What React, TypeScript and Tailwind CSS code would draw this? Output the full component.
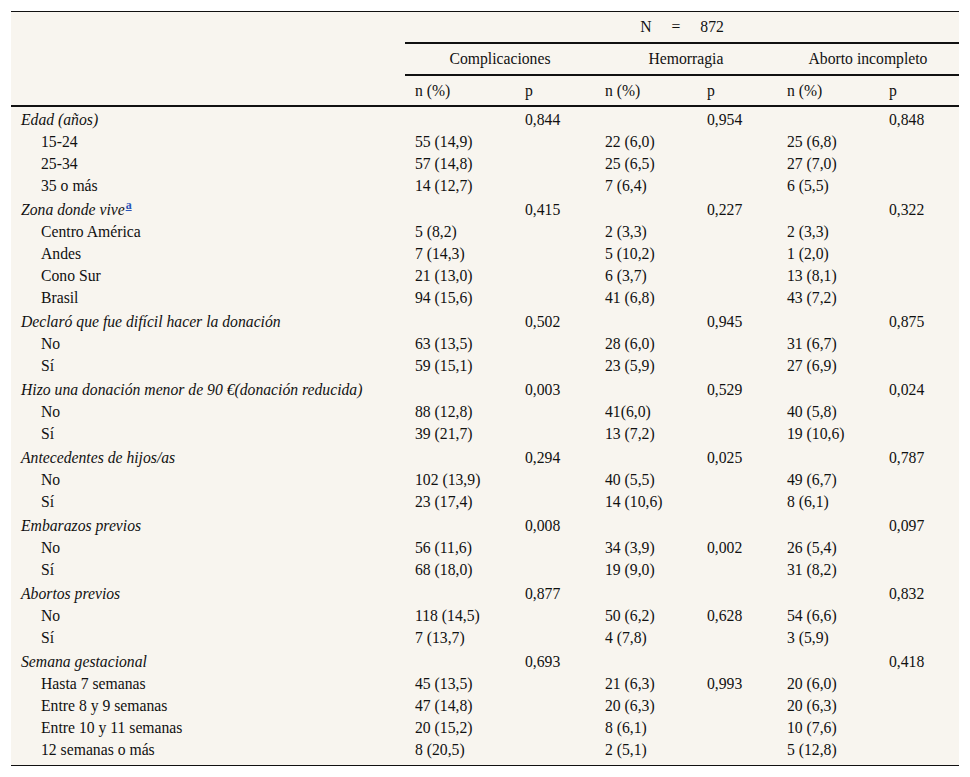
import React from "react"

type Row = { label: string; cells: string[]; head?: boolean; sup?: string }

const cols = ["w-[110px]", "w-[80px]", "w-[102px]", "w-[80px]", "w-[102px]", "w-[80px]"]

const rows: Row[] = [
  { label: "Edad (años)", head: true, cells: ["", "0,844", "", "0,954", "", "0,848"] },
  { label: "15-24", cells: ["55 (14,9)", "", "22 (6,0)", "", "25 (6,8)", ""] },
  { label: "25-34", cells: ["57 (14,8)", "", "25 (6,5)", "", "27 (7,0)", ""] },
  { label: "35 o más", cells: ["14 (12,7)", "", "7 (6,4)", "", "6 (5,5)", ""] },
  { label: "Zona donde vive", sup: "a", head: true, cells: ["", "0,415", "", "0,227", "", "0,322"] },
  { label: "Centro América", cells: ["5 (8,2)", "", "2 (3,3)", "", "2 (3,3)", ""] },
  { label: "Andes", cells: ["7 (14,3)", "", "5 (10,2)", "", "1 (2,0)", ""] },
  { label: "Cono Sur", cells: ["21 (13,0)", "", "6 (3,7)", "", "13 (8,1)", ""] },
  { label: "Brasil", cells: ["94 (15,6)", "", "41 (6,8)", "", "43 (7,2)", ""] },
  { label: "Declaró que fue difícil hacer la donación", head: true, cells: ["", "0,502", "", "0,945", "", "0,875"] },
  { label: "No", cells: ["63 (13,5)", "", "28 (6,0)", "", "31 (6,7)", ""] },
  { label: "Sí", cells: ["59 (15,1)", "", "23 (5,9)", "", "27 (6,9)", ""] },
  { label: "Hizo una donación menor de 90 €(donación reducida)", head: true, cells: ["", "0,003", "", "0,529", "", "0,024"] },
  { label: "No", cells: ["88 (12,8)", "", "41(6,0)", "", "40 (5,8)", ""] },
  { label: "Sí", cells: ["39 (21,7)", "", "13 (7,2)", "", "19 (10,6)", ""] },
  { label: "Antecedentes de hijos/as", head: true, cells: ["", "0,294", "", "0,025", "", "0,787"] },
  { label: "No", cells: ["102 (13,9)", "", "40 (5,5)", "", "49 (6,7)", ""] },
  { label: "Sí", cells: ["23 (17,4)", "", "14 (10,6)", "", "8 (6,1)", ""] },
  { label: "Embarazos previos", head: true, cells: ["", "0,008", "", "", "", "0,097"] },
  { label: "No", cells: ["56 (11,6)", "", "34 (3,9)", "0,002", "26 (5,4)", ""] },
  { label: "Sí", cells: ["68 (18,0)", "", "19 (9,0)", "", "31 (8,2)", ""] },
  { label: "Abortos previos", head: true, cells: ["", "0,877", "", "", "", "0,832"] },
  { label: "No", cells: ["118 (14,5)", "", "50 (6,2)", "0,628", "54 (6,6)", ""] },
  { label: "Sí", cells: ["7 (13,7)", "", "4 (7,8)", "", "3 (5,9)", ""] },
  { label: "Semana gestacional", head: true, cells: ["", "0,693", "", "", "", "0,418"] },
  { label: "Hasta 7 semanas", cells: ["45 (13,5)", "", "21 (6,3)", "0,993", "20 (6,0)", ""] },
  { label: "Entre 8 y 9 semanas", cells: ["47 (14,8)", "", "20 (6,3)", "", "20 (6,3)", ""] },
  { label: "Entre 10 y 11 semanas", cells: ["20 (15,2)", "", "8 (6,1)", "", "10 (7,6)", ""] },
  { label: "12 semanas o más", cells: ["8 (20,5)", "", "2 (5,1)", "", "5 (12,8)", ""] },
]

function BodyRow({ row }: { row: Row }) {
  return (
    <div className={row.head ? "flex h-[24px] items-end" : "flex h-[22px] items-end"}>
      <div className={row.head ? "w-[394px] h-[22px] pl-[10px] italic" : "w-[394px] h-[22px] pl-[30px]"}>
        {row.label}
        {row.sup && (
          <span className="relative -top-[6px] ml-[1px] text-[12px] leading-none text-[#2a55b8] underline not-italic font-semibold">
            {row.sup}
          </span>
        )}
      </div>
      {row.cells.map((c, i) => (
        <div key={i} className={`${cols[i]} h-[22px] pl-[10px] whitespace-nowrap`}>
          {c}
        </div>
      ))}
    </div>
  )
}

export default function App() {
  return (
    <div className="min-h-screen bg-white pt-[11px] px-[11px]">
      <div
        className="w-[948px] bg-[#f8f5ef] border-t border-b border-[#111] pb-[4px] text-[15.7px] leading-[22px] text-[#111]"
        style={{ fontFamily: '"Liberation Serif", "Times New Roman", serif' }}
      >
        <div className="flex">
          <div className="w-[394px]" />
          <div className="flex h-[32px] flex-1 items-center justify-center border-b-2 border-[#111]">
            <span>N</span>
            <span className="mx-[20px]">=</span>
            <span>872</span>
          </div>
        </div>
        <div className="flex">
          <div className="w-[394px]" />
          <div className="flex h-[32px] w-[190px] items-center justify-center border-b-2 border-[#111]">Complicaciones</div>
          <div className="flex h-[32px] w-[182px] items-center justify-center border-b-2 border-[#111]">Hemorragia</div>
          <div className="flex h-[32px] w-[182px] items-center justify-center border-b-2 border-[#111]">Aborto incompleto</div>
        </div>
        <div className="flex h-[31px] items-center border-b-2 border-[#111]">
          <div className="w-[394px]" />
          {["n (%)", "p", "n (%)", "p", "n (%)", "p"].map((h, i) => (
            <div key={i} className={`${cols[i]} pl-[10px]`}>
              {h}
            </div>
          ))}
        </div>
        {rows.map((r, i) => (
          <BodyRow key={i} row={r} />
        ))}
      </div>
    </div>
  )
}
